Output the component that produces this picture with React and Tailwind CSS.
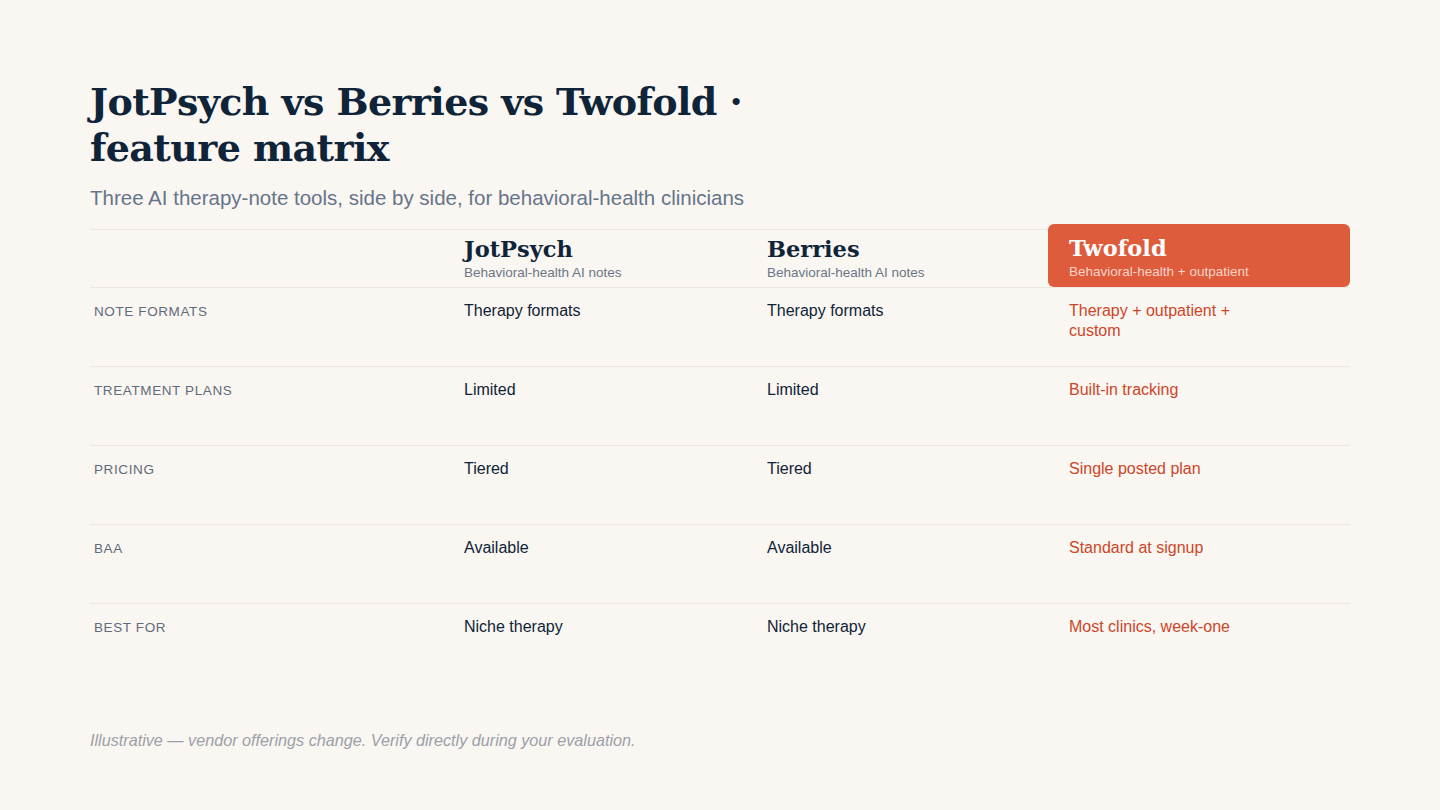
import React from "react";

const rows = [
  { label: "Note formats", a: "Therapy formats", b: "Therapy formats", c: "Therapy + outpatient + custom" },
  { label: "Treatment plans", a: "Limited", b: "Limited", c: "Built-in tracking" },
  { label: "Pricing", a: "Tiered", b: "Tiered", c: "Single posted plan" },
  { label: "BAA", a: "Available", b: "Available", c: "Standard at signup" },
  { label: "Best for", a: "Niche therapy", b: "Niche therapy", c: "Most clinics, week-one" },
];

const serif = "font-['Georgia','DejaVu_Serif','Liberation_Serif',serif]";

export default function App() {
  return (
    <div className="w-[1440px] h-[810px] bg-[#faf6f2] font-['Liberation_Sans',Arial,sans-serif] text-[#0f2438] overflow-hidden">
      <div className="px-[90px] pt-[79px]">
        <h1 className={`${serif} font-bold text-[38px] leading-[46px] tracking-[-0.6px] w-[700px] text-[#0f2438]`}>
          JotPsych vs Berries vs Twofold · feature matrix
        </h1>
        <p className="mt-[15px] text-[20.5px] leading-[24px] text-[#65758a]">
          Three AI therapy-note tools, side by side, for behavioral-health clinicians
        </p>

        <div className="mt-[19px] border-t border-[#ece7e2]">
          <div className="grid grid-cols-[354px_303px_301px_302px] border-b border-[#ece7e2] h-[58px]">
            <div />
            <div className="pl-[20px] pt-[5px]">
              <div className={`${serif} font-bold text-[22.5px] leading-[28px]`}>JotPsych</div>
              <div className="text-[13.5px] leading-[16px] text-[#6b7685] mt-[2px]">Behavioral-health AI notes</div>
            </div>
            <div className="pl-[20px] pt-[5px]">
              <div className={`${serif} font-bold text-[22.5px] leading-[28px]`}>Berries</div>
              <div className="text-[13.5px] leading-[16px] text-[#6b7685] mt-[2px]">Behavioral-health AI notes</div>
            </div>
            <div className="-mt-[6px] h-[63px] bg-[#de5b3c] rounded-[6px] pl-[21px] pt-[10px]">
              <div className={`${serif} font-bold text-[22.5px] leading-[28px] text-white`}>Twofold</div>
              <div className="text-[13.5px] leading-[16px] text-[#f8d3c8] mt-[2px]">Behavioral-health + outpatient</div>
            </div>
          </div>

          {rows.map((r, i) => (
            <div
              key={r.label}
              className={`grid grid-cols-[354px_303px_301px_302px] h-[79px] pt-[13px] ${
                i < rows.length - 1 ? "border-b border-[#ece7e2]" : ""
              }`}
            >
              <div className="pl-[4px] pt-[1px] text-[13.5px] leading-[20px] uppercase tracking-[0.045em] text-[#5e6c7b]">
                {r.label}
              </div>
              <div className="pl-[20px] text-[16px] leading-[20px]">{r.a}</div>
              <div className="pl-[20px] text-[16px] leading-[20px]">{r.b}</div>
              <div className="pl-[21px] text-[16px] leading-[20px] text-[#cc4628] max-w-[200px]">{r.c}</div>
            </div>
          ))}
        </div>

        <p className="mt-[45px] text-[16.2px] italic text-[#9aa0a8]">
          Illustrative — vendor offerings change. Verify directly during your evaluation.
        </p>
      </div>
    </div>
  );
}
